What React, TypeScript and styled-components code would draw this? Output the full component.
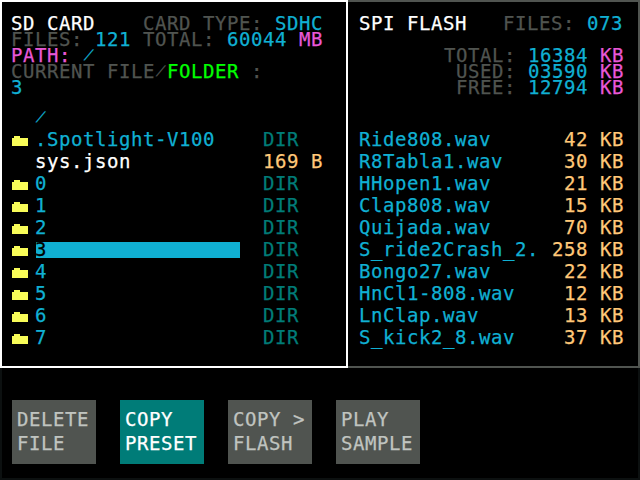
import React from "react";
import styled, { createGlobalStyle } from "styled-components";

const c = {
  cyan: "#10b0d3",
  grey: "#505450",
  magenta: "#e858d8",
  green: "#00ff00",
  yellow: "#f8fc58",
  amber: "#ffc878",
  teal: "#007c78",
  white: "#ffffff",
  light: "#c0c4c0",
};

const Global = createGlobalStyle`
  * { box-sizing: border-box; }
  html, body { margin: 0; background: #000; overflow: hidden; }
`;

const Screen = styled.div`
  width: 640px;
  height: 480px;
  display: flex;
  flex-direction: column;
  background: #000;
  color: ${c.cyan};
  font-family: "DejaVu Sans Mono", "Liberation Mono", monospace;
  font-size: 19px;
  line-height: 16px;
  letter-spacing: 0.56px;
  font-variant-ligatures: none;
  -webkit-text-stroke: 0.25px currentColor;
  white-space: pre;
`;

const Panes = styled.main`
  display: grid;
  grid-template-columns: 348px 292px;
  height: 368px;
`;

const SdPane = styled.section`
  border: 2px solid ${c.white};
  padding: 13px 9px 0;
`;

const FlashPane = styled.section`
  border: 2px solid ${c.grey};
  border-left: 0;
  padding: 13px 14px 0 11px;
`;

const Header = styled.header`
  height: 94px;
`;

const Line = styled.div<{ $right?: boolean }>`
  display: flex;
  height: 16px;
  justify-content: ${(p) => (p.$right ? "flex-end" : "flex-start")};
`;

const Gap = styled.div`
  height: 16px;
`;

const Run = styled.span<{ $color?: string }>`
  color: ${(p) => p.$color ?? c.cyan};
`;

const Slash = styled.span<{ $color?: string }>`
  display: block;
  width: 12px;
  height: 16px;
  padding-left: 2px;
  font-size: 13px;
  line-height: 16px;
  letter-spacing: 0;
  transform: skewX(-20deg);
  color: ${(p) => p.$color ?? c.cyan};
`;

const List = styled.div`
  display: grid;
  grid-auto-rows: 22px;
`;

const SdRow = styled.div`
  display: grid;
  grid-template-columns: 24px 204px 24px 1fr;
  align-items: start;
`;

const Icon = styled.span`
  height: 16px;
  padding: 5px 0 0 1px;
`;

const Name = styled.span<{ $color?: string }>`
  height: 16px;
  color: ${(p) => p.$color ?? c.cyan};
`;

const SelectedName = styled.span`
  height: 16px;
  margin: 1px -1px 0 1px;
  text-indent: -1px;
  line-height: 15px;
  background: ${c.cyan};
  color: #000;
`;

const Size = styled.span<{ $dir?: boolean }>`
  grid-column: 4;
  color: ${(p) => (p.$dir ? c.teal : c.amber)};
`;

const FlashRow = styled.div`
  display: flex;
  justify-content: space-between;
`;

const Footer = styled.footer`
  flex: 1;
  display: flex;
  align-items: flex-start;
  gap: 24px;
  padding: 32px 10px 0;
  border: 2px solid #0c1010;
  border-top: 0;
`;

const Key = styled.button<{ $active?: boolean }>`
  width: 84px;
  height: 64px;
  flex: none;
  margin: 0;
  padding: 7px 0 9px 5px;
  border: 0;
  text-align: left;
  font: inherit;
  letter-spacing: inherit;
  line-height: 24px;
  white-space: pre;
  background: ${(p) => (p.$active ? c.teal : c.grey)};
  color: ${(p) => (p.$active ? c.white : c.light)};
`;

const FolderSvg = styled.svg`
  display: block;
`;

const Folder = () => (
  <FolderSvg width="16" height="10" shapeRendering="crispEdges" aria-hidden="true">
    <path d="M2 0h6v2h8v8H0V2h2z" fill={c.yellow} />
  </FolderSvg>
);

type Entry = { name: string; size?: string };

const sdEntries: Entry[] = [
  { name: ".Spotlight-V100" },
  { name: "sys.json", size: "169 B" },
  ...["0", "1", "2", "3", "4", "5", "6", "7"].map((name) => ({ name })),
];

const flashEntries = [
  ["Ride808.wav", "42"],
  ["R8Tabla1.wav", "30"],
  ["HHopen1.wav", "21"],
  ["Clap808.wav", "15"],
  ["Quijada.wav", "70"],
  ["S_ride2Crash_2.", "258"],
  ["Bongo27.wav", "22"],
  ["HnCl1-808.wav", "12"],
  ["LnClap.wav", "13"],
  ["S_kick2_8.wav", "37"],
];

const keys = [
  ["DELETE", "FILE"],
  ["COPY", "PRESET"],
  ["COPY >", "FLASH"],
  ["PLAY", "SAMPLE"],
];

const usage = [
  ["TOTAL:", "16384"],
  ["USED:", "03590"],
  ["FREE:", "12794"],
];

export default function App() {
  const selected = "3";
  return (
    <>
      <Global />
      <Screen>
        <Panes>
          <SdPane>
            <Header>
              <Line>
                <Run $color={c.white}>{"SD CARD    "}</Run>
                <Run $color={c.grey}>{"CARD TYPE: "}</Run>
                <Run>SDHC</Run>
              </Line>
              <Line>
                <Run $color={c.grey}>{"FILES: "}</Run>
                <Run>{"121 "}</Run>
                <Run $color={c.grey}>{"TOTAL: "}</Run>
                <Run>{"60044 "}</Run>
                <Run $color={c.magenta}>MB</Run>
              </Line>
              <Line>
                <Run $color={c.magenta}>{"PATH: "}</Run>
                <Slash>/</Slash>
              </Line>
              <Line>
                <Run $color={c.grey}>CURRENT FILE</Run>
                <Slash $color={c.grey}>/</Slash>
                <Run $color={c.green}>{"FOLDER "}</Run>
                <Run $color={c.grey}>:</Run>
              </Line>
              <Line>
                <Run>{selected}</Run>
              </Line>
            </Header>
            <List>
              <SdRow>
                <Icon />
                <Slash>/</Slash>
              </SdRow>
              {sdEntries.map((e) => (
                <SdRow key={e.name}>
                  <Icon>{!e.size && <Folder />}</Icon>
                  {e.name === selected ? (
                    <SelectedName>{e.name}</SelectedName>
                  ) : (
                    <Name $color={e.size ? c.white : c.cyan}>{e.name}</Name>
                  )}
                  <Size $dir={!e.size}>{e.size ?? "DIR"}</Size>
                </SdRow>
              ))}
            </List>
          </SdPane>
          <FlashPane>
            <Header>
              <Line>
                <Run $color={c.white}>{"SPI FLASH   "}</Run>
                <Run $color={c.grey}>{"FILES: "}</Run>
                <Run>073</Run>
              </Line>
              <Gap />
              {usage.map(([label, value]) => (
                <Line $right key={label}>
                  <Run $color={c.grey}>{label + " "}</Run>
                  <Run>{value + " "}</Run>
                  <Run $color={c.magenta}>KB</Run>
                </Line>
              ))}
            </Header>
            <List>
              <FlashRow />
              {flashEntries.map(([name, size]) => (
                <FlashRow key={name}>
                  <Run>{name}</Run>
                  <Run $color={c.amber}>{size + " KB"}</Run>
                </FlashRow>
              ))}
            </List>
          </FlashPane>
        </Panes>
        <Footer>
          {keys.map((lines, i) => (
            <Key key={lines.join(" ")} $active={i === 1}>
              {lines.join("\n")}
            </Key>
          ))}
        </Footer>
      </Screen>
    </>
  );
}
